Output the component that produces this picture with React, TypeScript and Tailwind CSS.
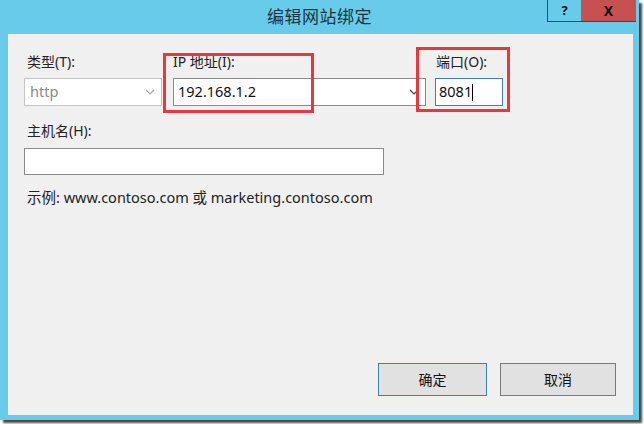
import React from "react";

const font = { fontFamily: '"Noto Sans", "Noto Sans CJK SC", sans-serif' };

function Chevron({ color }: { color: string }) {
  return (
    <svg width="10" height="6" viewBox="0 0 10 6" fill="none">
      <path d="M1 1 L5 5 L9 1" stroke={color} strokeWidth="1.2" />
    </svg>
  );
}

export default function App() {
  return (
    <div className="w-[644px] h-[424px] bg-white relative overflow-hidden" style={font}>
      <div className="w-[639px] h-[420px] bg-[#68cbea] flex flex-col shadow-[3px_3px_2px_rgba(40,40,40,0.85)]">
        {/* title bar */}
        <div className="h-[33px] relative flex items-center justify-center shrink-0">
          <span className="text-[17px] text-[#1b3443] tracking-[0.5px]">编辑网站绑定</span>
          <div className="absolute top-0 right-[3px] flex">
            <div className="w-[34px] h-[22px] border-l border-b border-[#334751] flex items-center justify-center text-[13px] font-bold text-[#111]">?</div>
            <div className="w-[55px] h-[22px] bg-[#c75050] border-b border-[#334751] flex items-center justify-center text-[14px] font-bold text-[#111]">X</div>
          </div>
        </div>
        {/* content */}
        <div className="flex-1 mx-[7px] mr-[6px] mb-[5px] bg-[#f0f0f0] border-t border-l border-[#9db5c4] relative flex flex-col text-[14px] text-[#222]">
          <div className="flex pl-[16px] pt-[19px]">
            <div className="w-[138px] flex flex-col">
              <span className="ml-[3px] h-[18px] leading-[18px]">类型(T):</span>
              <div className="mt-[7px] h-[28px] border border-[#c5c5c5] bg-white flex items-center justify-between pl-[5px] pr-[6px] text-[#8a8a8a] text-[14.5px]">
                <span>http</span>
                <Chevron color="#a8a8a8" />
              </div>
            </div>
            <div className="w-[253px] ml-[11px] flex flex-col">
              <span className="h-[18px] leading-[18px]">IP 地址(I):</span>
              <div className="mt-[7px] h-[28px] border border-[#8a8a8a] bg-white flex items-center justify-between pl-[4px] pr-[6px] text-[14.5px] text-[#111]">
                <span>192.168.1.2</span>
                <Chevron color="#444" />
              </div>
            </div>
            <div className="w-[68px] ml-[9px] flex flex-col">
              <span className="ml-[1px] h-[18px] leading-[18px]">端口(O):</span>
              <div className="mt-[7px] h-[28px] border border-[#3c7fb1] bg-white flex items-center pl-[3px] text-[14.5px] text-[#111]">
                <span>8081</span>
                <span className="w-[1px] h-[17px] bg-black" />
              </div>
            </div>
          </div>
          <div className="pl-[16px] mt-[16px] flex flex-col">
            <span className="ml-[3px] h-[18px] leading-[18px]">主机名(H):</span>
            <div className="mt-[8px] w-[360px] h-[27px] border border-[#8a8a8a] bg-white" />
            <span className="ml-[3px] mt-[12px] h-[20px] leading-[20px] text-[14.5px] text-[#222]">示例: www.contoso.com 或 marketing.contoso.com</span>
          </div>
          <div className="mt-auto mb-[19px] flex justify-end pr-[17px] gap-[13px]">
            <button className="w-[109px] h-[33px] border border-[#3c7fb1] bg-[#e1e1e1] text-[14px] text-[#111]">确定</button>
            <button className="w-[116px] h-[33px] border border-[#7a7a7a] bg-[#e1e1e1] text-[14px] text-[#111]">取消</button>
          </div>
          {/* annotation boxes */}
          <div className="absolute left-[155px] top-[19px] w-[151px] h-[60px] border-[3px] border-[#e8383d] pointer-events-none" />
          <div className="absolute left-[408px] top-[13px] w-[94px] h-[65px] border-[3px] border-[#e8383d] pointer-events-none" />
        </div>
      </div>
    </div>
  );
}
